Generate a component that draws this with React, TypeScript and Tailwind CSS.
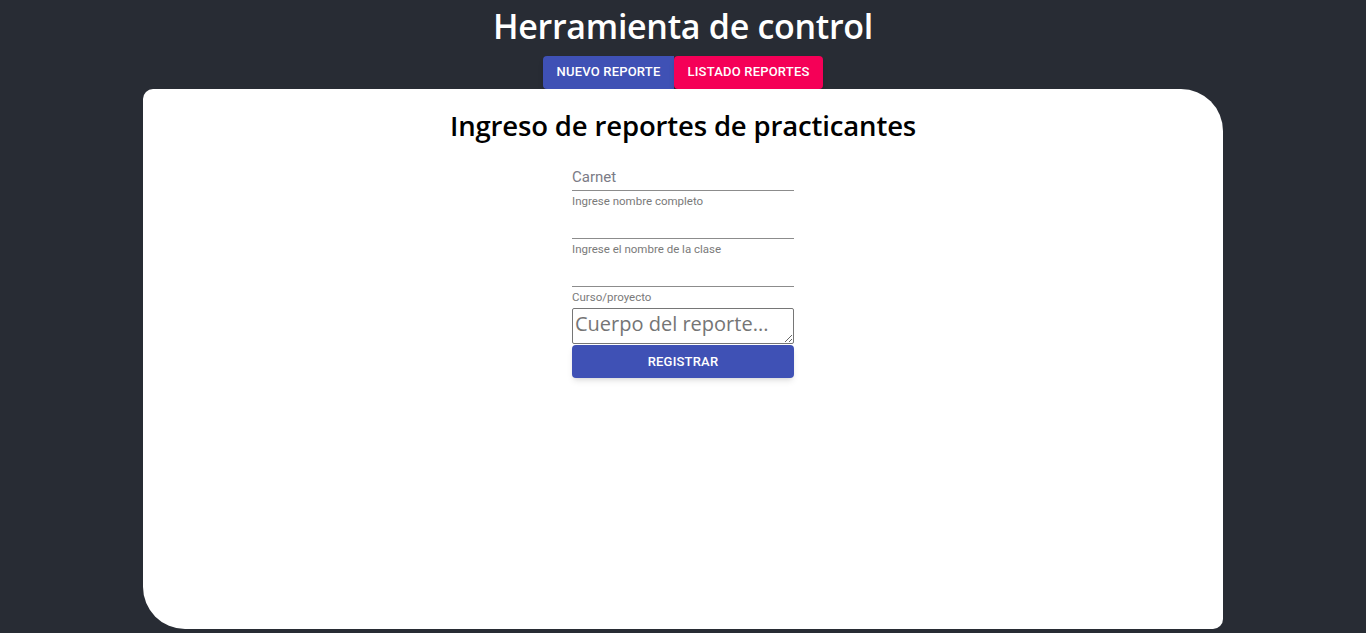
import React from "react";

// --- Underlined text field with helper text below ---
const Field: React.FC<{ placeholder?: string; helper: string }> = ({ placeholder, helper }) => (
  <div className="flex flex-col">
    <input
      placeholder={placeholder}
      className="h-[29px] w-full border-b border-[#8c8c8c] bg-transparent pt-[6px] pb-[4px] text-[15px] leading-[19px] text-[#222] outline-none placeholder:text-[#7b7b86]"
      style={{ fontFamily: "Roboto, sans-serif" }}
    />
    <p className="mt-[4px] h-[13px] text-[11.5px] leading-[13px] text-[#7a7a7a]" style={{ fontFamily: "Roboto, sans-serif" }}>
      {helper}
    </p>
  </div>
);

export default function App() {
  return (
    <div
      className="flex h-[633px] w-full flex-col items-center overflow-hidden bg-[#282c34]"
      style={{ fontFamily: "'Open Sans', 'Noto Sans', sans-serif" }}
    >
      {/* --- Header --- */}
      <h1 className="mt-[4px] text-[34px] font-semibold leading-[44px] tracking-[-0.3px] text-white">
        Herramienta de control
      </h1>

      {/* --- Tabs --- */}
      <div className="mt-[8px] flex" style={{ fontFamily: "Roboto, sans-serif" }}>
        <button className="h-[33px] w-[131px] rounded-l-[4px] bg-[#3f51b5] pb-[2px] text-[13px] font-medium uppercase tracking-[0.2px] text-white shadow-md">
          Nuevo reporte
        </button>
        <button className="h-[33px] w-[149px] rounded-[4px] bg-[#f50057] pb-[2px] text-[13px] font-medium uppercase tracking-[0.2px] text-white shadow-md">
          Listado reportes
        </button>
      </div>

      {/* --- Card --- */}
      <div className="flex h-[540px] w-[1080px] flex-col items-center rounded-tl-[10px] rounded-tr-[42px] rounded-br-[10px] rounded-bl-[42px] bg-white">
        <h2 className="mt-[17px] text-[27.5px] font-semibold leading-[40px] tracking-[-0.15px] text-black">
          Ingreso de reportes de practicantes
        </h2>

        <form className="mt-[16px] flex w-[222px] flex-col gap-[2px]">
          <Field placeholder="Carnet" helper="Ingrese nombre completo" />
          <Field helper="Ingrese el nombre de la clase" />
          <Field helper="Curso/proyecto" />
          <textarea
            placeholder="Cuerpo del reporte..."
            className="mt-[2px] h-[36px] w-full resize-y rounded-[2px] border border-[#767676] px-[2px] text-[20px] leading-[30px] text-black outline-none placeholder:text-[#757575]"
            style={{ fontFamily: "'Open Sans', 'Noto Sans', sans-serif" }}
          />
          <button
            type="button"
            className="-mt-[1px] h-[33px] w-full rounded-[4px] bg-[#3f51b5] text-[13px] font-medium uppercase tracking-[0.2px] text-white shadow-md"
            style={{ fontFamily: "Roboto, sans-serif" }}
          >
            Registrar
          </button>
        </form>
      </div>
    </div>
  );
}
